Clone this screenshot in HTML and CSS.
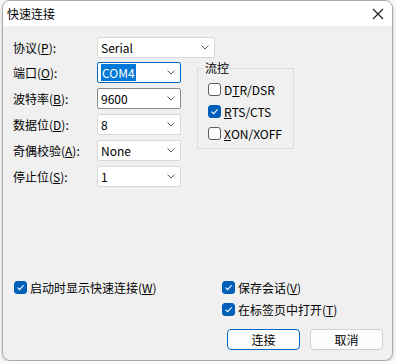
FILE: index.html
```html
<!DOCTYPE html>
<html lang="zh-CN">
<head>
    <meta charset="UTF-8">
    <meta name="viewport" content="width=device-width, initial-scale=1.0">
    <title>快速连接</title>
    <link rel="stylesheet" href="styles.css">
</head>
<body>

    <div class="dialog">
        <div class="titlebar">
            <span class="title">快速连接</span>
            <svg class="close" width="12" height="12" viewBox="0 0 12 12">
                <path d="M1 1 L11 11 M11 1 L1 11" stroke="#1a1a1a" stroke-width="1.1" fill="none"/>
            </svg>
        </div>

        <div class="content">
            <div class="row">
                <span class="label">协议(<u>P</u>):</span>
                <div class="combo wide light">
                    <span class="value">Serial</span>
                    <svg class="arrow" width="8" height="5" viewBox="0 0 8 5"><path d="M0.5 0.5 L4 4 L7.5 0.5" stroke="#606060" fill="none"/></svg>
                </div>
            </div>

            <div class="middle">
                <div class="form">
                    <span class="label">端口(<u>O</u>):</span>
                    <div class="combo focus">
                        <span class="value"><span class="sel">COM4</span></span>
                        <svg class="arrow" width="8" height="5" viewBox="0 0 8 5"><path d="M0.5 0.5 L4 4 L7.5 0.5" stroke="#606060" fill="none"/></svg>
                    </div>

                    <span class="label">波特率(<u>B</u>):</span>
                    <div class="combo edit">
                        <span class="value">9600</span>
                        <svg class="arrow" width="8" height="5" viewBox="0 0 8 5"><path d="M0.5 0.5 L4 4 L7.5 0.5" stroke="#606060" fill="none"/></svg>
                    </div>

                    <span class="label">数据位(<u>D</u>):</span>
                    <div class="combo light">
                        <span class="value">8</span>
                        <svg class="arrow" width="8" height="5" viewBox="0 0 8 5"><path d="M0.5 0.5 L4 4 L7.5 0.5" stroke="#606060" fill="none"/></svg>
                    </div>

                    <span class="label">奇偶校验(<u>A</u>):</span>
                    <div class="combo light">
                        <span class="value">None</span>
                        <svg class="arrow" width="8" height="5" viewBox="0 0 8 5"><path d="M0.5 0.5 L4 4 L7.5 0.5" stroke="#606060" fill="none"/></svg>
                    </div>

                    <span class="label">停止位(<u>S</u>):</span>
                    <div class="combo light">
                        <span class="value">1</span>
                        <svg class="arrow" width="8" height="5" viewBox="0 0 8 5"><path d="M0.5 0.5 L4 4 L7.5 0.5" stroke="#606060" fill="none"/></svg>
                    </div>
                </div>

                <fieldset class="group">
                    <legend>流控</legend>
                    <div class="check"><span class="box"></span>D<u>T</u>R/DSR</div>
                    <div class="check"><span class="box on"></span><u>R</u>TS/CTS</div>
                    <div class="check"><span class="box"></span><u>X</u>ON/XOFF</div>
                </fieldset>
            </div>

            <div class="bottom">
                <div class="check"><span class="box on"></span>启动时显示快速连接(<u>W</u>)</div>
                <div class="side">
                    <div class="check"><span class="box on"></span>保存会话(<u>V</u>)</div>
                    <div class="check"><span class="box on"></span>在标签页中打开(<u>T</u>)</div>
                    <div class="buttons">
                        <button class="btn default">连接</button>
                        <button class="btn">取消</button>
                    </div>
                </div>
            </div>
        </div>
    </div>

</body>
</html>
```

FILE: styles.css
```css
/* halaman */
body {
    margin: 0;
    padding: 0 0 0 2px;
    background: #fbfbfb;
    font-family: "Noto Sans CJK SC", "Noto Sans", sans-serif;
    font-size: 12px;
    color: #000;
}

/* jendela dialog */
.dialog {
    width: 391px;
    height: 361px;
    box-sizing: border-box;
    border: 1px solid #a9a9a9;
    border-radius: 8px;
    overflow: hidden;
    display: flex;
    flex-direction: column;
    background: #f0f0f0;
    box-shadow: 0 1px 4px rgba(0, 0, 0, 0.2);
}

.titlebar {
    height: 25px;
    flex: none;
    background: #fff;
    display: flex;
    align-items: center;
    justify-content: space-between;
    padding: 0 8px 0 4px;
}

.title {
    font-size: 12px;
    line-height: 14px;
}

.content {
    flex: 1;
    display: flex;
    flex-direction: column;
    padding: 11px 9px 10px 10px;
}

.row {
    display: flex;
    align-items: center;
}

.label {
    width: 84px;
    line-height: 21px;
    white-space: nowrap;
}

/* combobox */
.combo {
    width: 84px;
    height: 21px;
    box-sizing: border-box;
    background: #fff;
    border: 1px solid #d9d9d9;
    border-radius: 2px;
    display: flex;
    align-items: center;
    justify-content: space-between;
    padding: 0 5px 0 3px;
}

.combo.wide {
    width: 118px;
}

.combo.edit {
    border-color: #8a8a8a;
}

.combo.focus {
    border-color: #0067c0;
}

.value {
    line-height: 15px;
}

.sel {
    background: #0078d7;
    color: #fff;
    padding: 0 1px;
}

.middle {
    display: flex;
    margin-top: 4px;
}

.form {
    display: grid;
    grid-template-columns: 84px 84px;
    grid-auto-rows: 21px;
    row-gap: 5px;
}

/* kotak grup */
.group {
    width: 97px;
    height: 88px;
    box-sizing: border-box;
    margin: 0 0 0 16px;
    padding: 8px 0 0 10px;
    border: 1px solid #dcdcdc;
    position: relative;
    top: -1px;
}

.group legend {
    padding: 0 1px;
    margin-left: -4px;
    line-height: 14px;
}

.group .check {
    margin-top: 9px;
}

.group .check:first-of-type {
    margin-top: 0;
}

/* checkbox */
.check {
    display: flex;
    align-items: center;
    height: 13px;
    line-height: 13px;
    white-space: nowrap;
}

.box {
    width: 13px;
    height: 13px;
    box-sizing: border-box;
    border: 1px solid #5c5c5c;
    border-radius: 3px;
    background: #fff;
    margin-right: 3px;
    flex: none;
}

.box.on {
    border-color: #005fb8;
    background: #005fb8 url("data:image/svg+xml;utf8,<svg xmlns='http://www.w3.org/2000/svg' width='11' height='11' viewBox='0 0 11 11'><path d='M2.5 5.6 L4.6 7.6 L8.6 3.4' stroke='white' stroke-width='1.1' fill='none'/></svg>") center no-repeat;
}

.bottom {
    margin-top: auto;
    display: flex;
    padding-left: 1px;
}

.side {
    margin-left: auto;
    width: 161px;
    display: flex;
    flex-direction: column;
    gap: 9px;
}

.buttons {
    display: flex;
    gap: 10px;
    padding-left: 5px;
    margin-top: 4px;
}

.btn {
    width: 73px;
    height: 21px;
    box-sizing: border-box;
    font-family: inherit;
    font-size: 12px;
    line-height: 14px;
    background: #fdfdfd;
    border: 1px solid #d0d0d0;
    border-radius: 4px;
    padding: 0;
    color: #000;
}

.btn.default {
    border-color: #0067c0;
}
```
